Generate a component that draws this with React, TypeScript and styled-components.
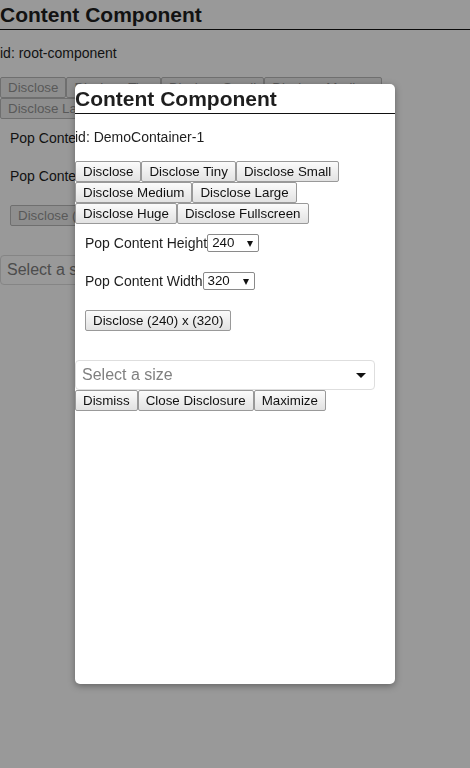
import React from "react";
import styled, { createGlobalStyle } from "styled-components";

const Global = createGlobalStyle`
  html, body { margin: 0; padding: 0; }
  body {
    font-family: "Liberation Sans", Arial, sans-serif;
    font-size: 14px;
    color: #1e1e1e;
    background: #ffffff;
  }
`;

const Page = styled.div`
  position: relative;
  min-height: 768px;
`;

const Panel = styled.section`
  display: flex;
  flex-direction: column;
  align-items: stretch;
`;

const Title = styled.h1`
  margin: 0;
  padding: 3px 0 2px;
  font-size: 21px;
  line-height: 24px;
  font-weight: bold;
  border-bottom: 1px solid #111;
`;

const IdLine = styled.div`
  margin: 15px 0 16px;
  line-height: 16px;
`;

const ButtonGroup = styled.div`
  display: flex;
  flex-wrap: wrap;
`;

const Btn = styled.button<{ $inert?: boolean }>`
  box-sizing: border-box;
  height: 21px;
  margin: 0;
  padding: 0 7px;
  font-family: "Liberation Sans", Arial, sans-serif;
  font-size: 13.333px;
  line-height: 19px;
  white-space: nowrap;
  color: ${(p) => (p.$inert ? "#959595" : "#111")};
  border: 1px solid ${(p) => (p.$inert ? "#bababa" : "#999")};
  border-radius: 2px;
  background: ${(p) => (p.$inert ? "#ededed" : "linear-gradient(#fbfbfb, #e2e2e2)")};
`;

const Rows = styled.div`
  display: flex;
  flex-direction: column;
  align-items: flex-start;
  gap: 20px;
  padding: 10px;
`;

const Row = styled.label`
  display: flex;
  align-items: center;
  height: 18px;
  line-height: 16px;
`;

const SelectWrap = styled.span`
  position: relative;
  display: inline-flex;
  &::after {
    content: "";
    position: absolute;
    right: 6px;
    top: 7px;
    border-left: 3.5px solid transparent;
    border-right: 3.5px solid transparent;
    border-top: 6px solid #111;
    pointer-events: none;
  }
`;

const SmallSelect = styled.select`
  appearance: none;
  -webkit-appearance: none;
  box-sizing: border-box;
  width: 52px;
  height: 18px;
  margin: 0;
  padding: 0 0 0 4px;
  font-family: "Liberation Sans", Arial, sans-serif;
  font-size: 13.333px;
  line-height: 16px;
  color: #111;
  background: #fff;
  border: 1px solid #8a8a8a;
  border-radius: 2px;
`;

const SizeSelect = styled.div`
  box-sizing: border-box;
  display: flex;
  align-items: center;
  justify-content: space-between;
  width: 300px;
  height: 30px;
  margin-top: 19px;
  padding: 0 8px 0 6px;
  border: 1px solid #dedede;
  border-radius: 4px;
  background: #fff;
  font-size: 16px;
  color: #808080;
`;

const Caret = styled.span`
  width: 0;
  height: 0;
  margin-top: 1px;
  border-left: 5px solid transparent;
  border-right: 5px solid transparent;
  border-top: 5px solid #111;
`;

const Overlay = styled.div`
  position: fixed;
  inset: 0;
  background: rgba(0, 0, 0, 0.4);
`;

const Popup = styled.div`
  position: absolute;
  left: 75px;
  top: 84px;
  width: 320px;
  height: 600px;
  background: #fff;
  border-radius: 5px;
  box-shadow: 0 2px 7px rgba(0, 0, 0, 0.35);
  overflow: hidden;
`;

const discloseLabels = [
  "Disclose",
  "Disclose Tiny",
  "Disclose Small",
  "Disclose Medium",
  "Disclose Large",
  "Disclose Huge",
  "Disclose Fullscreen",
];

function Content({ id, inert, popup }: { id: string; inert?: boolean; popup?: boolean }) {
  return (
    <Panel>
      <Title>Content Component</Title>
      <IdLine>id: {id}</IdLine>
      <ButtonGroup>
        {discloseLabels.map((l) => (
          <Btn key={l} $inert={inert}>
            {l}
          </Btn>
        ))}
      </ButtonGroup>
      <Rows>
        <Row>
          Pop Content Height
          <SelectWrap>
            <SmallSelect defaultValue="240">
              <option value="240">240</option>
            </SmallSelect>
          </SelectWrap>
        </Row>
        <Row>
          Pop Content Width
          <SelectWrap>
            <SmallSelect defaultValue="320">
              <option value="320">320</option>
            </SmallSelect>
          </SelectWrap>
        </Row>
        <Btn $inert={inert}>Disclose (240) x (320)</Btn>
      </Rows>
      <SizeSelect>
        <span>Select a size</span>
        <Caret />
      </SizeSelect>
      {popup && (
        <ButtonGroup>
          <Btn>Dismiss</Btn>
          <Btn>Close Disclosure</Btn>
          <Btn>Maximize</Btn>
        </ButtonGroup>
      )}
    </Panel>
  );
}

export default function App() {
  return (
    <Page>
      <Global />
      <Content id="root-component" inert />
      <Overlay />
      <Popup>
        <Content id="DemoContainer-1" popup />
      </Popup>
    </Page>
  );
}
